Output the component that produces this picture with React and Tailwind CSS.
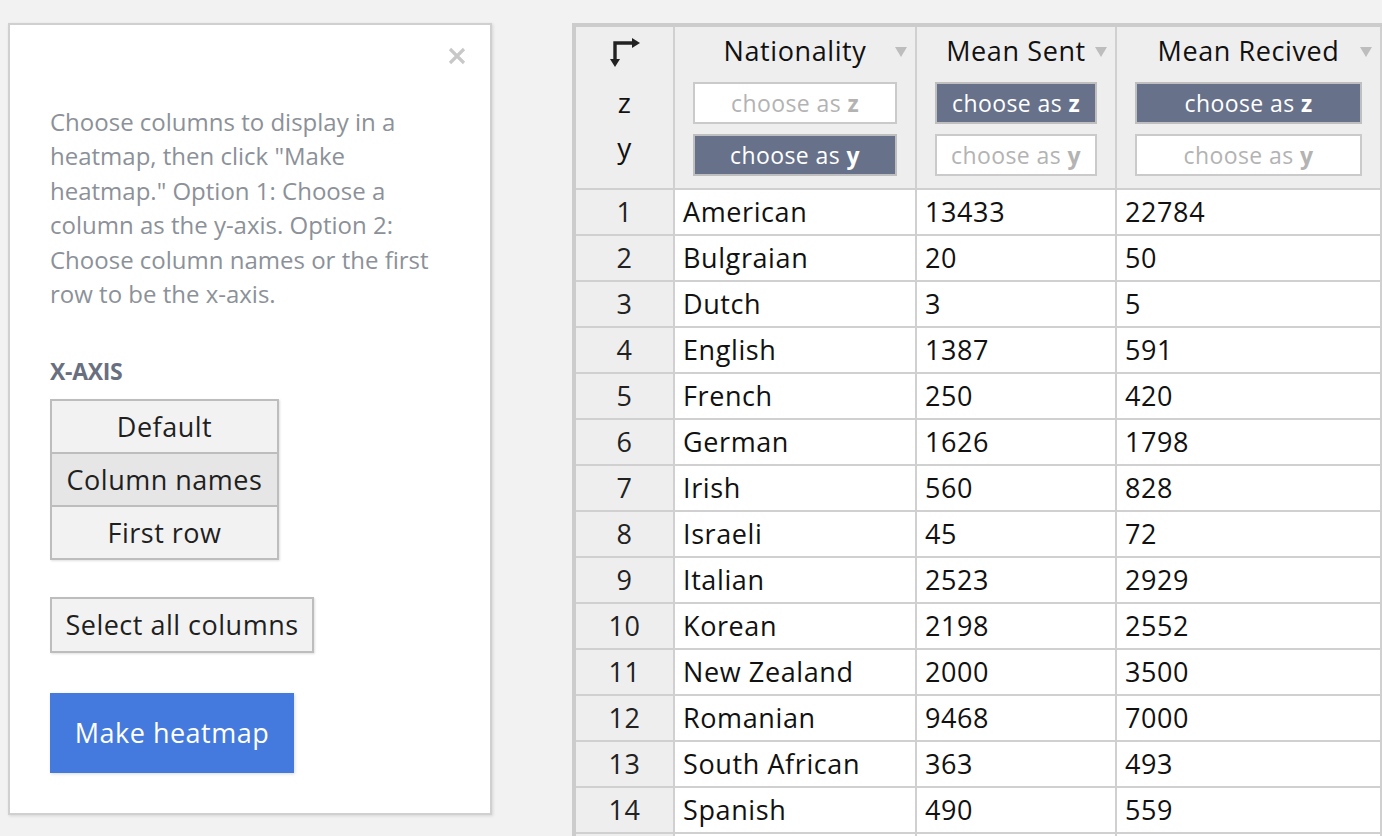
import React from 'react';

const rows = [
  ['American', '13433', '22784'],
  ['Bulgraian', '20', '50'],
  ['Dutch', '3', '5'],
  ['English', '1387', '591'],
  ['French', '250', '420'],
  ['German', '1626', '1798'],
  ['Irish', '560', '828'],
  ['Israeli', '45', '72'],
  ['Italian', '2523', '2929'],
  ['Korean', '2198', '2552'],
  ['New Zealand', '2000', '3500'],
  ['Romanian', '9468', '7000'],
  ['South African', '363', '493'],
  ['Spanish', '490', '559'],
];

const cols = [
  { title: 'Nationality', z: false, y: true, w: 'w-[242px]' },
  { title: 'Mean Sent', z: true, y: false, w: 'w-[200px]' },
  { title: 'Mean Recived', z: true, y: false, w: 'w-[265px]' },
];

const Caret = ({ className }) => (
  <svg viewBox="0 0 12 12" className={className}>
    <path d="M0 1 H12 L6 11 Z" fill="#bdbdbd" />
  </svg>
);

const ChooseBtn = ({ active, axis }) => (
  <button
    className={`w-full h-[42px] border-2 text-[23px] tracking-[0.4px] leading-none ${
      active ? 'bg-[#67718a] border-[#bfbfbf] text-white' : 'bg-white border-[#cacaca] text-[#b3b3b3]'
    }`}
  >
    choose as <span className="font-bold">{axis}</span>
  </button>
);

export default function App() {
  return (
    <div
      className="w-[1382px] h-[836px] overflow-hidden bg-[#f2f2f2] flex items-start pt-[23px] pl-[8px]"
      style={{ fontFamily: '"Open Sans", "Noto Sans", sans-serif' }}
    >
      {/* Left panel */}
      <div className="relative w-[484px] h-[792px] shrink-0 bg-white border-2 border-[#d0d0d0] shadow-[1px_1px_3px_rgba(0,0,0,0.12)] pl-[40px] pt-[80px]">
        <button className="absolute right-[24px] top-[22px] w-[18px] h-[18px]">
          <svg viewBox="0 0 18 18" className="w-[18px] h-[18px]">
            <path d="M2 2 L16 16 M16 2 L2 16" stroke="#c8c8c8" strokeWidth="3.2" />
          </svg>
        </button>
        <p className="w-[400px] text-[24px] leading-[34.4px] text-[#8c9199]">
          Choose columns to display in a heatmap, then click "Make heatmap." Option 1: Choose a column as the y-axis. Option 2: Choose column names or the first row to be the x-axis.
        </p>
        <div className="mt-[45px] text-[23px] leading-[30px] font-bold text-[#68707f] tracking-[-0.3px]">X-AXIS</div>
        <div className="mt-[13px] w-[229px] flex flex-col shadow-[1px_1px_2px_rgba(0,0,0,0.12)]">
          {['Default', 'Column names', 'First row'].map((t, i) => (
            <button
              key={t}
              className={`h-[55px] border-2 border-[#bdbdbd] text-[27px] tracking-[0.5px] text-[#1f1f1f] ${i > 0 ? '-mt-[2px]' : ''} ${
                i === 1 ? 'bg-[#e6e6e6]' : 'bg-[#f2f2f2]'
              }`}
            >
              {t}
            </button>
          ))}
        </div>
        <button className="mt-[37px] h-[56px] w-[264px] border-2 border-[#bdbdbd] bg-[#f2f2f2] text-[27px] tracking-[0.5px] text-[#1f1f1f] shadow-[1px_1px_2px_rgba(0,0,0,0.12)]">
          Select all columns
        </button>
        <div>
          <button className="mt-[40px] h-[80px] w-[244px] bg-[#447ade] text-white text-[27px] tracking-[0.5px] shadow-[1px_1px_3px_rgba(0,0,0,0.15)]">
            Make heatmap
          </button>
        </div>
      </div>

      {/* Table */}
      <div className="ml-[80px] shrink-0 border-l-4 border-t-4 border-[#cccccc]">
        <table className="table-fixed border-separate border-spacing-0 w-[1004px] text-[27px] tracking-[0.6px] text-[#111]">
          <thead>
            <tr className="bg-[#eeeeee]">
              <th className="w-[99px] h-[163px] border-r-2 border-b-2 border-[#d0d0d0] p-0 align-top">
                <div className="flex flex-col items-center pt-[10px]">
                  <svg viewBox="0 0 30 30" className="w-[30px] h-[30px]">
                    <path d="M5 24 V6 H23" fill="none" stroke="#222" strokeWidth="3.4" />
                    <path d="M22 1 L30 6 L22 11 Z" fill="#222" />
                    <path d="M0 22 L5 30 L10 22 Z" fill="#222" />
                  </svg>
                  <div className="mt-[17px] h-[36px] leading-[36px] text-[28px] font-normal">z</div>
                  <div className="mt-[9px] h-[36px] leading-[36px] text-[28px] font-normal">y</div>
                </div>
              </th>
              {cols.map((c) => (
                <th key={c.title} className={`${c.w} relative border-r-2 border-b-2 border-[#d0d0d0] p-0 px-[18px] align-top font-normal`}>
                  <div className="pt-[6px] h-[44px] leading-[36px] text-center">{c.title}</div>
                  <Caret className="absolute right-[8px] top-[19px] w-[12px] h-[12px]" />
                  <div className="mt-[11px] flex flex-col gap-[10px]">
                    <ChooseBtn active={c.z} axis="z" />
                    <ChooseBtn active={c.y} axis="y" />
                  </div>
                </th>
              ))}
              <th className="w-[237px] border-b-2 border-[#d0d0d0] p-0"></th>
            </tr>
          </thead>
          <tbody>
            {rows.map((r, i) => (
              <tr key={i} className="h-[46px]">
                <td className="bg-[#eeeeee] text-center border-r-2 border-b-2 border-[#d0d0d0] p-0 text-[#222]">{i + 1}</td>
                {r.map((v, j) => (
                  <td key={j} className="bg-white border-r-2 border-b-2 border-[#d0d0d0] p-0 pl-[8px] leading-[44px]">
                    {v}
                  </td>
                ))}
                <td className="bg-white border-b-2 border-[#d0d0d0] p-0"></td>
              </tr>
            ))}
            <tr className="h-[46px]">
              <td className="bg-[#eeeeee] border-r-2 border-[#d0d0d0] p-0"></td>
              <td className="bg-white border-r-2 border-[#d0d0d0] p-0"></td>
              <td className="bg-white border-r-2 border-[#d0d0d0] p-0"></td>
              <td className="bg-white border-r-2 border-[#d0d0d0] p-0"></td>
              <td className="bg-white p-0"></td>
            </tr>
          </tbody>
        </table>
      </div>
    </div>
  );
}
